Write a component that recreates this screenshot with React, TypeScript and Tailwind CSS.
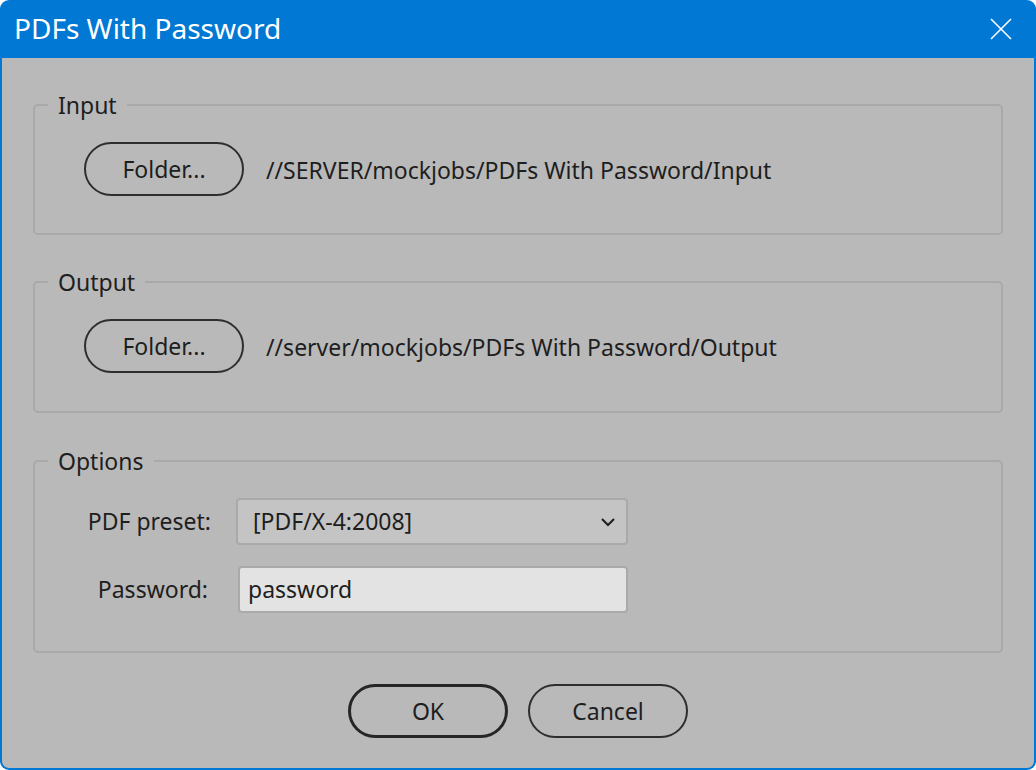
import React from "react";

const font = { fontFamily: '"Noto Sans", "Open Sans", sans-serif' };

function Group({ title, children, className }: { title: string; children: React.ReactNode; className?: string }) {
  return (
    <fieldset className={"border-2 border-[#a9a9a9] rounded-[5px] px-0 " + (className || "")}>
      <legend className="ml-[13px] px-[10px] text-[23px] leading-[30px] text-[#1e1e1e]">{title}</legend>
      <div className="px-[49px]">{children}</div>
    </fieldset>
  );
}

function PillButton({ label, bold }: { label: string; bold?: boolean }) {
  return (
    <div
      className={
        "w-[160px] h-[54px] rounded-full flex items-center justify-center text-[23px] text-[#1e1e1e] " +
        (bold ? "border-[3px] border-[#262626]" : "border-2 border-[#2e2e2e]")
      }
    >
      {label}
    </div>
  );
}

export default function App() {
  return (
    <div className="w-[1036px] h-[770px] bg-[#0078d4] rounded-[9px] flex flex-col overflow-hidden" style={font}>
      <div className="h-[58px] shrink-0 flex items-center justify-between pl-[14px] pr-[24px]">
        <span className="text-white text-[28px] leading-none pb-[2px]">PDFs With Password</span>
        <svg width="22" height="22" viewBox="0 0 22 22">
          <path d="M1 1 L21 21 M21 1 L1 21" stroke="white" strokeWidth="1.6" fill="none" />
        </svg>
      </div>
      <div className="flex-1 mx-[2px] mb-[2px] bg-[#b9b9b9] rounded-b-[7px] px-[31px] pt-[32px] flex flex-col">
        <Group title="Input" className="pt-[22px] pb-[37px]">
          <div className="flex items-center gap-[22px]">
            <PillButton label="Folder..." />
            <span className="text-[23px] text-[#1e1e1e] pt-[2px]">//SERVER/mockjobs/PDFs With Password/Input</span>
          </div>
        </Group>
        <Group title="Output" className="mt-[32px] pt-[22px] pb-[38px]">
          <div className="flex items-center gap-[22px]">
            <PillButton label="Folder..." />
            <span className="text-[23px] text-[#1e1e1e] pt-[2px]">//server/mockjobs/PDFs With Password/Output</span>
          </div>
        </Group>
        <Group title="Options" className="mt-[33px] pt-[22px] pb-[38px]">
          <div className="flex flex-col gap-[21px] text-[23px] text-[#1e1e1e]">
            <div className="flex items-center">
              <span className="w-[127px] text-right">PDF preset:</span>
              <div className="ml-[25px] w-[392px] h-[47px] bg-[#c4c4c4] border-2 border-[#a9a9a9] rounded-[4px] flex items-center justify-between pl-[15px] pr-[10px]">
                <span>[PDF/X-4:2008]</span>
                <svg width="16" height="10" viewBox="0 0 16 10">
                  <path d="M2 2 L8 8 L14 2" stroke="#1e1e1e" strokeWidth="2" fill="none" />
                </svg>
              </div>
            </div>
            <div className="flex items-center">
              <span className="w-[127px] text-right pr-[3px]">Password:</span>
              <div className="ml-[27px] w-[390px] h-[47px] bg-[#e3e3e3] border-2 border-[#a9a9a9] rounded-[4px] flex items-center pl-[8px]">
                <span>password</span>
              </div>
            </div>
          </div>
        </Group>
        <div className="flex justify-center gap-[20px] mt-[31px]">
          <PillButton label="OK" bold />
          <PillButton label="Cancel" />
        </div>
      </div>
    </div>
  );
}
